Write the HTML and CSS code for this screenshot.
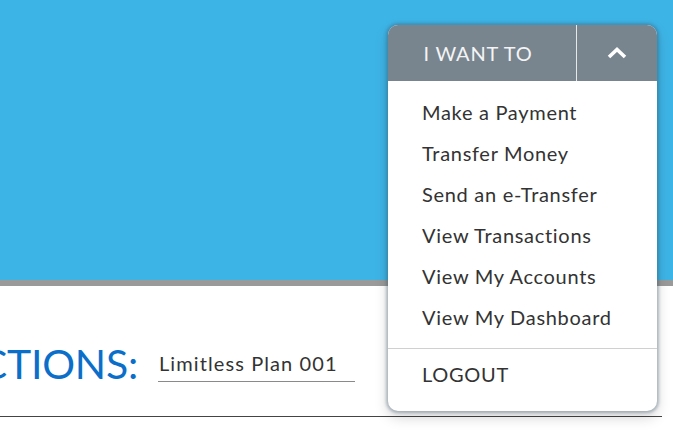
FILE: index.html
```html
<!DOCTYPE html>
<html>
<head>
<meta charset="utf-8">
<link rel="stylesheet" href="styles.css">
</head>
<body>
<div class="hero"></div>
<div class="content">
  <div class="row">
    <div class="heading-clip"><h1 class="heading">TRANSACTIONS:</h1></div>
    <div class="select">Limitless Plan 001</div>
  </div>
  <div class="rule"></div>
</div>
<div class="dropdown">
  <div class="dd-head">
    <div class="dd-title">I WANT TO</div>
    <div class="dd-toggle">
      <svg width="20" height="12" viewBox="0 0 20 12"><polyline points="2,10 10,2.5 18,10" fill="none" stroke="#fff" stroke-width="3.6" stroke-linejoin="miter"/></svg>
    </div>
  </div>
  <div class="dd-body">
    <div class="dd-item">Make a Payment</div>
    <div class="dd-item">Transfer Money</div>
    <div class="dd-item">Send an e-Transfer</div>
    <div class="dd-item">View Transactions</div>
    <div class="dd-item">View My Accounts</div>
    <div class="dd-item">View My Dashboard</div>
    <div class="dd-sep"></div>
    <div class="dd-item">LOGOUT</div>
  </div>
</div>
</body>
</html>
```
FILE: styles.css
```css
html, body { margin: 0; padding: 0; }
body {
  width: 673px;
  height: 435px;
  overflow: hidden;
  background: #fff;
  font-family: Lato, "Liberation Sans", sans-serif;
  position: relative;
}
.hero {
  height: 280px;
  background: #3db4e6;
  border-bottom: 6px solid #9a9a9a;
}
.content { padding-top: 53px; }
.row { display: flex; align-items: flex-start; gap: 21px; }
.heading-clip {
  width: 138px;
  overflow: hidden;
  display: flex;
  justify-content: flex-end;
}
.heading {
  margin: 0;
  font-size: 41px;
  line-height: 50px;
  font-weight: 400;
  color: #0b6fca;
  white-space: nowrap;
  letter-spacing: -0.2px;
}
.select {
  margin-top: 12px;
  width: 196px;
  margin-left: -1px;
  padding-left: 1px;
  font-size: 20px;
  line-height: 24px;
  padding-bottom: 6px;
  border-bottom: 1px solid #8a8a8a;
  color: #333;
  letter-spacing: 1.1px;
}
.rule {
  margin-top: 27px;
  width: 662px;
  height: 1px;
  background: #444;
}
.dropdown {
  position: absolute;
  left: 388px;
  top: 25px;
  width: 269px;
  border-radius: 10px;
  background: #fff;
  box-shadow: 0 0 3px 2px rgba(60, 90, 110, 0.35), 0 6px 14px rgba(0, 0, 0, 0.18);
  overflow: hidden;
}
.dd-head {
  display: flex;
  height: 56px;
  background: #78858f;
  color: #f4f4f4;
}
.dd-title {
  width: 180px;
  padding-right: 8px;
  display: flex;
  align-items: center;
  justify-content: center;
  font-size: 20px;
  letter-spacing: 0.8px;
  border-right: 1px solid #e8e8e8;
}
.dd-toggle {
  flex: 1;
  display: flex;
  align-items: center;
  justify-content: center;
}
.dd-body { padding: 11px 0 16px; }
.dd-item {
  height: 41px;
  line-height: 41px;
  padding-left: 34px;
  font-size: 20px;
  color: #333;
  letter-spacing: 0.7px;
}
.dd-sep {
  height: 1px;
  background: #d0d0d0;
  margin: 10px 0 5px;
}
```
